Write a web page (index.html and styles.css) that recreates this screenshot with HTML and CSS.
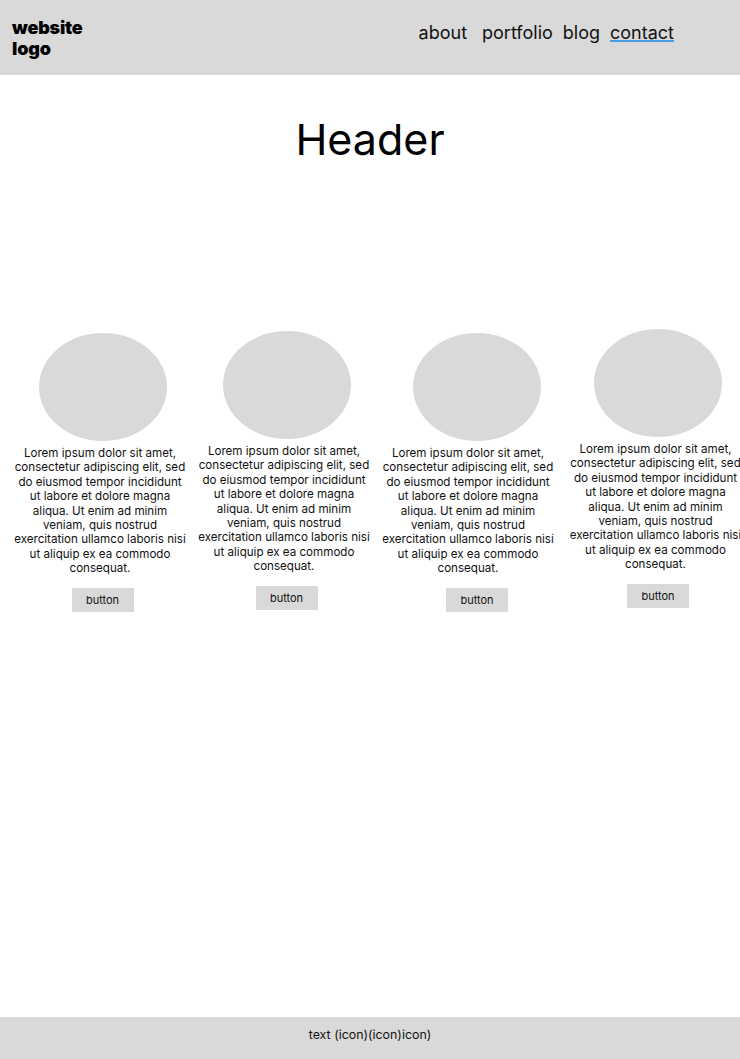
FILE: index.html
```html
<!DOCTYPE html>
<html lang="en">
<head>
<meta charset="utf-8">
<title>Wireframe</title>
<link rel="stylesheet" href="styles.css">
</head>
<body>
<header class="topbar">
  <div class="logo">website<br>logo</div>
  <nav class="nav">
    <a class="nav-link nav-link--about" href="#">about</a>
    <a class="nav-link" href="#">portfolio</a>
    <a class="nav-link" href="#">blog</a>
    <a class="nav-link nav-link--active" href="#">contact</a>
  </nav>
</header>
<main class="main">
  <h1 class="title">Header</h1>
  <section class="cards">
    <article class="card card--a">
      <div class="circle"></div>
      <p class="text">Lorem ipsum dolor sit amet,<br>consectetur adipiscing elit, sed<br>do eiusmod tempor incididunt<br>ut labore et dolore magna<br>aliqua. Ut enim ad minim<br>veniam, quis nostrud<br>exercitation ullamco laboris nisi<br>ut aliquip ex ea commodo<br>consequat.</p>
      <button class="btn">button</button>
    </article>
    <article class="card card--b">
      <div class="circle"></div>
      <p class="text">Lorem ipsum dolor sit amet,<br>consectetur adipiscing elit, sed<br>do eiusmod tempor incididunt<br>ut labore et dolore magna<br>aliqua. Ut enim ad minim<br>veniam, quis nostrud<br>exercitation ullamco laboris nisi<br>ut aliquip ex ea commodo<br>consequat.</p>
      <button class="btn">button</button>
    </article>
    <article class="card card--c">
      <div class="circle"></div>
      <p class="text">Lorem ipsum dolor sit amet,<br>consectetur adipiscing elit, sed<br>do eiusmod tempor incididunt<br>ut labore et dolore magna<br>aliqua. Ut enim ad minim<br>veniam, quis nostrud<br>exercitation ullamco laboris nisi<br>ut aliquip ex ea commodo<br>consequat.</p>
      <button class="btn">button</button>
    </article>
    <article class="card card--d">
      <div class="circle"></div>
      <p class="text">Lorem ipsum dolor sit amet,<br>consectetur adipiscing elit, sed<br>do eiusmod tempor incididunt<br>ut labore et dolore magna<br>aliqua. Ut enim ad minim<br>veniam, quis nostrud<br>exercitation ullamco laboris nisi<br>ut aliquip ex ea commodo<br>consequat.</p>
      <button class="btn">button</button>
    </article>
  </section>
</main>
<footer class="footer">text (icon)(icon)icon)</footer>
</body>
</html>
```
FILE: styles.css
```css
* { box-sizing: border-box; }

html, body {
  margin: 0;
  padding: 0;
}

body {
  width: 740px;
  min-height: 1059px;
  overflow: hidden;
  display: flex;
  flex-direction: column;
  font-family: Inter, "Noto Sans", sans-serif;
  color: #000;
  background: #fff;
}

.topbar {
  height: 75px;
  background: #d9d9d9;
  display: flex;
  align-items: flex-start;
  justify-content: space-between;
  padding: 17px 66px 0 12px;
}

.logo {
  font-weight: 900;
  font-size: 18px;
  line-height: 21px;
  letter-spacing: -0.2px;
}

.nav {
  display: flex;
  gap: 10px;
  padding-top: 4px;
}

.nav-link {
  color: #111;
  text-decoration: none;
  font-size: 18px;
  line-height: 24px;
}

.nav-link--about { margin-right: 5px; }

.nav-link--active {
  text-decoration: underline;
  text-decoration-color: #4a9be3;
  text-decoration-thickness: 2px;
  text-underline-offset: 1px;
}

.main {
  flex: 1;
  display: flex;
  flex-direction: column;
}

.title {
  margin: 38px 0 0;
  text-align: center;
  font-weight: 400;
  font-size: 43px;
  line-height: 52px;
}

.cards {
  display: grid;
  grid-template-columns: repeat(4, 180px);
  column-gap: 4px;
  padding-left: 10px;
  margin-top: 164px;
  align-items: start;
}

.card {
  display: flex;
  flex-direction: column;
  align-items: center;
}

.circle {
  width: 128px;
  height: 108px;
  border-radius: 50%;
  background: #d9d9d9;
  margin-left: 5px;
}

.text {
  width: 180px;
  margin: 5px 0 0;
  font-size: 11.6px;
  line-height: 14.4px;
  text-align: center;
  white-space: nowrap;
  color: #111;
}

.btn {
  margin-top: 12px;
  margin-left: 5px;
  width: 62px;
  height: 24px;
  border: 0;
  padding: 0;
  background: #d9d9d9;
  font-family: inherit;
  font-size: 11px;
  color: #111;
}

.card--a { margin-top: 4px; }
.card--b { margin-top: 2px; }
.card--c { margin-top: 4px; }
.card--c .circle,
.card--c .btn { margin-left: 18px; }
.card--d { margin-left: 7px; }

.footer {
  height: 42px;
  padding-bottom: 8px;
  background: #d9d9d9;
  display: flex;
  align-items: center;
  justify-content: center;
  font-size: 12.4px;
  color: #111;
}
```
